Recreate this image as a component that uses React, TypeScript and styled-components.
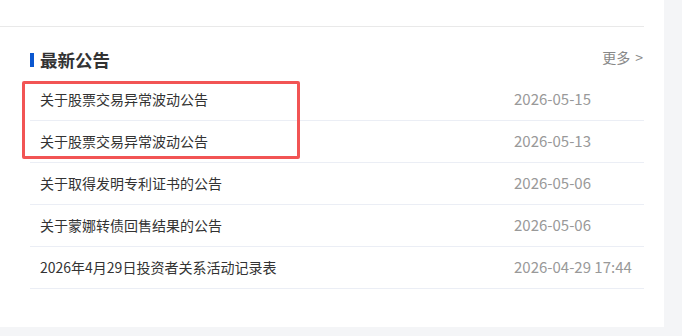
import React from "react";
import styled, { createGlobalStyle } from "styled-components";

const Global = createGlobalStyle`
  html, body { margin: 0; padding: 0; background: #f4f5f7; }
  body { font-family: "Noto Sans CJK SC", "Noto Sans", sans-serif; }
`;

const Panel = styled.div`
  width: 664px;
  height: 327px;
  background: #ffffff;
  padding-right: 20px;
  box-sizing: border-box;
  position: relative;
`;

const TopStrip = styled.div`
  height: 26px;
  border-bottom: 1px solid #e9e9e9;
`;

const Section = styled.section`
  padding-left: 30px;
`;

const Header = styled.div`
  height: 52px;
  display: flex;
  align-items: center;
  justify-content: space-between;
  padding-top: 14px;
  box-sizing: border-box;
`;

const Title = styled.h2`
  margin: 0;
  display: flex;
  align-items: center;
  gap: 6px;
  font-size: 17.5px;
  font-weight: 700;
  color: #333333;
  line-height: 1;
  &::before {
    content: "";
    width: 4px;
    height: 14px;
    background: #0b57d0;
  }
`;

const More = styled.a`
  font-size: 14px;
  color: #888888;
  text-decoration: none;
  display: flex;
  align-items: center;
  gap: 5px;
  margin-top: -6px;
  margin-right: 1px;
`;

const List = styled.ul`
  list-style: none;
  margin: 0;
  padding: 0;
`;

const Row = styled.li`
  height: 42px;
  box-sizing: border-box;
  border-bottom: 1px solid #ebeef5;
  display: flex;
  align-items: center;
  padding: 0 0 2px 10px;
`;

const RowTitle = styled.span`
  flex: 1;
  font-size: 14px;
  color: #333333;
`;

const RowDate = styled.span`
  width: 130px;
  font-size: 15px;
  color: #999999;
`;

const Highlight = styled.div`
  position: absolute;
  left: 22px;
  top: 81px;
  width: 278px;
  height: 78px;
  border: 3px solid #f25454;
  border-radius: 2px;
  box-sizing: border-box;
  pointer-events: none;
`;

const items = [
  { t: "关于股票交易异常波动公告", d: "2026-05-15" },
  { t: "关于股票交易异常波动公告", d: "2026-05-13" },
  { t: "关于取得发明专利证书的公告", d: "2026-05-06" },
  { t: "关于蒙娜转债回售结果的公告", d: "2026-05-06" },
  { t: "2026年4月29日投资者关系活动记录表", d: "2026-04-29 17:44" },
];

export default function App() {
  return (
    <>
      <Global />
      <Panel>
        <TopStrip />
        <Section>
          <Header>
            <Title>最新公告</Title>
            <More href="#">更多 <span>&gt;</span></More>
          </Header>
          <List>
            {items.map((it, i) => (
              <Row key={i}>
                <RowTitle>{it.t}</RowTitle>
                <RowDate>{it.d}</RowDate>
              </Row>
            ))}
          </List>
        </Section>
        <Highlight />
      </Panel>
    </>
  );
}
